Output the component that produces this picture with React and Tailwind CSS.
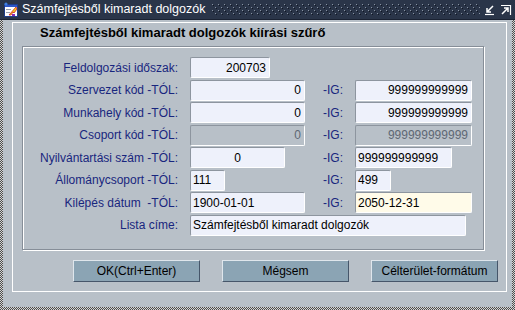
import React from 'react';

const Field = ({ w, value = '', align = 'left', tone = 'normal' }) => {
  const bg =
    tone === 'disabled' ? 'bg-[#b8c0c8] text-[#5e6874]' : tone === 'cream' ? 'bg-[#fffbe9] text-black' : 'bg-[#eef1fb] text-black';
  const al = align === 'right' ? 'justify-end pr-[3px]' : align === 'center' ? 'justify-center' : 'justify-start pl-[2px]';
  return (
    <div
      style={{ width: w }}
      className={`h-[21px] flex items-center ${al} ${bg} border border-t-[#8d959f] border-l-[#8d959f] border-b-white border-r-white rounded-[2px] text-[12px] leading-none`}
    >
      {value}
    </div>
  );
};

const Row = ({ label, left, right }) => (
  <div className="flex items-center h-[21px]">
    <div className="w-[155px] text-right text-[12px] text-[#18267e] whitespace-pre">{label}</div>
    <div className="w-[12px]" />
    <div className="w-[115px] flex">{left}</div>
    {right && (
      <>
        <div className="w-[50px] pl-[18px] text-[12px] text-[#18267e]">-IG:</div>
        {right}
      </>
    )}
  </div>
);

const AppIcon = () => (
  <svg width="16" height="16" viewBox="0 0 16 16">
    <rect x="1.5" y="2.5" width="13" height="12" fill="#ffffff" stroke="#1f3d8a" />
    <rect x="2" y="3" width="12" height="2" fill="#2d56c8" />
    <rect x="3" y="7" width="5" height="1" fill="#9aa0b0" />
    <rect x="3" y="10" width="4" height="1" fill="#9aa0b0" />
    <path d="M13 5 L6 13 L8 13 L10 10 L11 11 L14 7 Z" fill="#f5d21c" stroke="#d02020" strokeWidth="0.8" />
    <rect x="9" y="12" width="3" height="2" fill="#8a2ab8" />
    <circle cx="3" cy="2" r="1.6" fill="#3f7fe0" />
  </svg>
);

const TitleBar = () => (
  <div className="h-[20px] flex items-center bg-[#2a3549] border-b border-[#1a2232] shrink-0">
    <div className="pl-[3px] pr-[3px]">
      <AppIcon />
    </div>
    <span className="text-white text-[12.5px] leading-none">Számfejtésből kimaradt dolgozók</span>
    <svg className="ml-[7px]" width="268" height="12" viewBox="0 0 268 12">
      <defs>
        <pattern id="dots" width="6" height="6" patternUnits="userSpaceOnUse">
          <rect x="0" y="0" width="1" height="1" fill="#8893a2" />
          <rect x="1" y="1" width="1" height="1" fill="#121824" />
          <rect x="3" y="3" width="1" height="1" fill="#8893a2" />
          <rect x="4" y="4" width="1" height="1" fill="#121824" />
        </pattern>
      </defs>
      <rect width="268" height="12" fill="url(#dots)" />
    </svg>
    <div className="flex-1" />
    <svg width="12" height="12" viewBox="0 0 12 12" className="mr-[4px]">
      <path d="M9 2 L3 8 M3 4 L3 8 L7 8" stroke="#fff" strokeWidth="1.5" fill="none" />
      <path d="M1 10.5 H10" stroke="#fff" strokeWidth="1.2" />
    </svg>
    <svg width="12" height="12" viewBox="0 0 12 12" className="mr-[3px]">
      <path d="M1 1.5 H10.5 V11" stroke="#fff" strokeWidth="1.2" fill="none" />
      <path d="M2 10 L8 4 M4 4 H8 V8" stroke="#fff" strokeWidth="1.5" fill="none" />
    </svg>
  </div>
);

const Btn = ({ children }) => (
  <button className="w-[127px] h-[22px] bg-[#8ba4b4] text-[12px] text-black border border-t-[#dfe6ec] border-l-[#dfe6ec] border-b-[#46566a] border-r-[#46566a] flex items-center justify-center leading-none">
    {children}
  </button>
);

export default function App() {
  return (
    <div className="w-[515px] h-[310px] flex flex-col bg-[#2a3549] font-['Liberation_Sans',Arial,sans-serif] overflow-hidden">
      <TitleBar />
      <div className="flex-1 flex bg-[repeating-conic-gradient(#4d4d4d_0_25%,#d4d4d4_0_50%)] bg-[length:2px_2px] px-[3px] pb-[3px]">
        <div className="flex-1 flex bg-[#b8c0c8] pt-[2px] pl-[9px] pr-[5px] pb-[15px]">
          <div className="flex-1 flex flex-col border border-white">
            <div className="h-[19px] pl-[27px] flex items-center text-[13px] font-bold text-black">
              Számfejtésből kimaradt dolgozók kiírási szűrő
            </div>
            {/* filter group */}
            <div className="ml-[9px] mt-[4px] w-[462px] h-[204px] border border-[#868e98] shadow-[inset_1px_1px_0_#ffffff,1px_1px_0_#ffffff] pt-[10px] flex flex-col gap-[1.5px]">
              <Row label="Feldolgozási időszak:" left={<Field w={80} value="200703" align="right" />} />
              <Row
                label="Szervezet kód -TÓL:"
                left={<Field w={115} value="0" align="right" />}
                right={<Field w={117} value="999999999999" align="right" />}
              />
              <Row
                label="Munkahely kód -TÓL:"
                left={<Field w={115} value="0" align="right" />}
                right={<Field w={117} value="999999999999" align="right" />}
              />
              <Row
                label="Csoport kód -TÓL:"
                left={<Field w={115} value="0" align="right" tone="disabled" />}
                right={<Field w={117} value="999999999999" align="right" tone="disabled" />}
              />
              <Row
                label="Nyilvántartási szám -TÓL:"
                left={<Field w={95} value="0" align="center" />}
                right={<Field w={97} value="999999999999" />}
              />
              <Row
                label="Állománycsoport -TÓL:"
                left={<Field w={35} value="111" />}
                right={<Field w={36} value="499" />}
              />
              <Row
                label="Kilépés dátum  -TÓL:"
                left={<Field w={115} value="1900-01-01" />}
                right={<Field w={117} value="2050-12-31" tone="cream" />}
              />
              <div className="flex items-center h-[21px]">
                <div className="w-[155px] text-right text-[12px] text-[#18267e]">Lista címe:</div>
                <div className="w-[12px]" />
                <Field w={276} value="Számfejtésből kimaradt dolgozók" />
              </div>
            </div>
            <div className="mt-[10px] pl-[60px] flex gap-[22px]">
              <Btn>OK(Ctrl+Enter)</Btn>
              <Btn>Mégsem</Btn>
              <Btn>Célterület-formátum</Btn>
            </div>
          </div>
        </div>
      </div>
    </div>
  );
}
